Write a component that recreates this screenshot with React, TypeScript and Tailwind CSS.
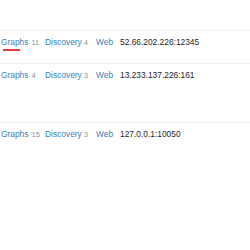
import React from 'react';

type Row = { graphs: number; discovery: number; addr: string; h: string; active?: boolean };

const rows: Row[] = [
  { graphs: 11, discovery: 4, addr: '52.66.202.226:12345', h: 'h-[33px]', active: true },
  { graphs: 4, discovery: 3, addr: '13.233.137.226:161', h: 'h-[59px]' },
  { graphs: 15, discovery: 3, addr: '127.0.0.1:10050', h: 'h-[128px]' },
];

export default function App() {
  return (
    <div className="w-[250px] h-[250px] overflow-hidden bg-white font-['Liberation_Sans',Arial,sans-serif] text-[8.4px] leading-none">
      <div className="h-[30px]" />
      {rows.map((r, i) => (
        <div key={i} className={`${r.h} border-t border-[#eef0f2] pt-[7px]`}>
          <div className="grid grid-cols-[45px_51px_24px_1fr] items-baseline">
            <div className="relative pl-px">
              <span className="text-[#3a83b8]">Graphs</span>
              <span className="ml-[3px] text-[7.5px] text-[#949494]">{r.graphs}</span>
              {r.active && <div className="absolute left-[3px] top-[11px] h-[1.5px] w-[17px] bg-[#e8393b]" />}
            </div>
            <div>
              <span className="text-[#3a83b8]">Discovery</span>
              <span className="ml-[2px] text-[7.5px] text-[#949494]">{r.discovery}</span>
            </div>
            <div className="text-[#3a83b8]">Web</div>
            <div className="text-[#262626]">{r.addr}</div>
          </div>
        </div>
      ))}
    </div>
  );
}
